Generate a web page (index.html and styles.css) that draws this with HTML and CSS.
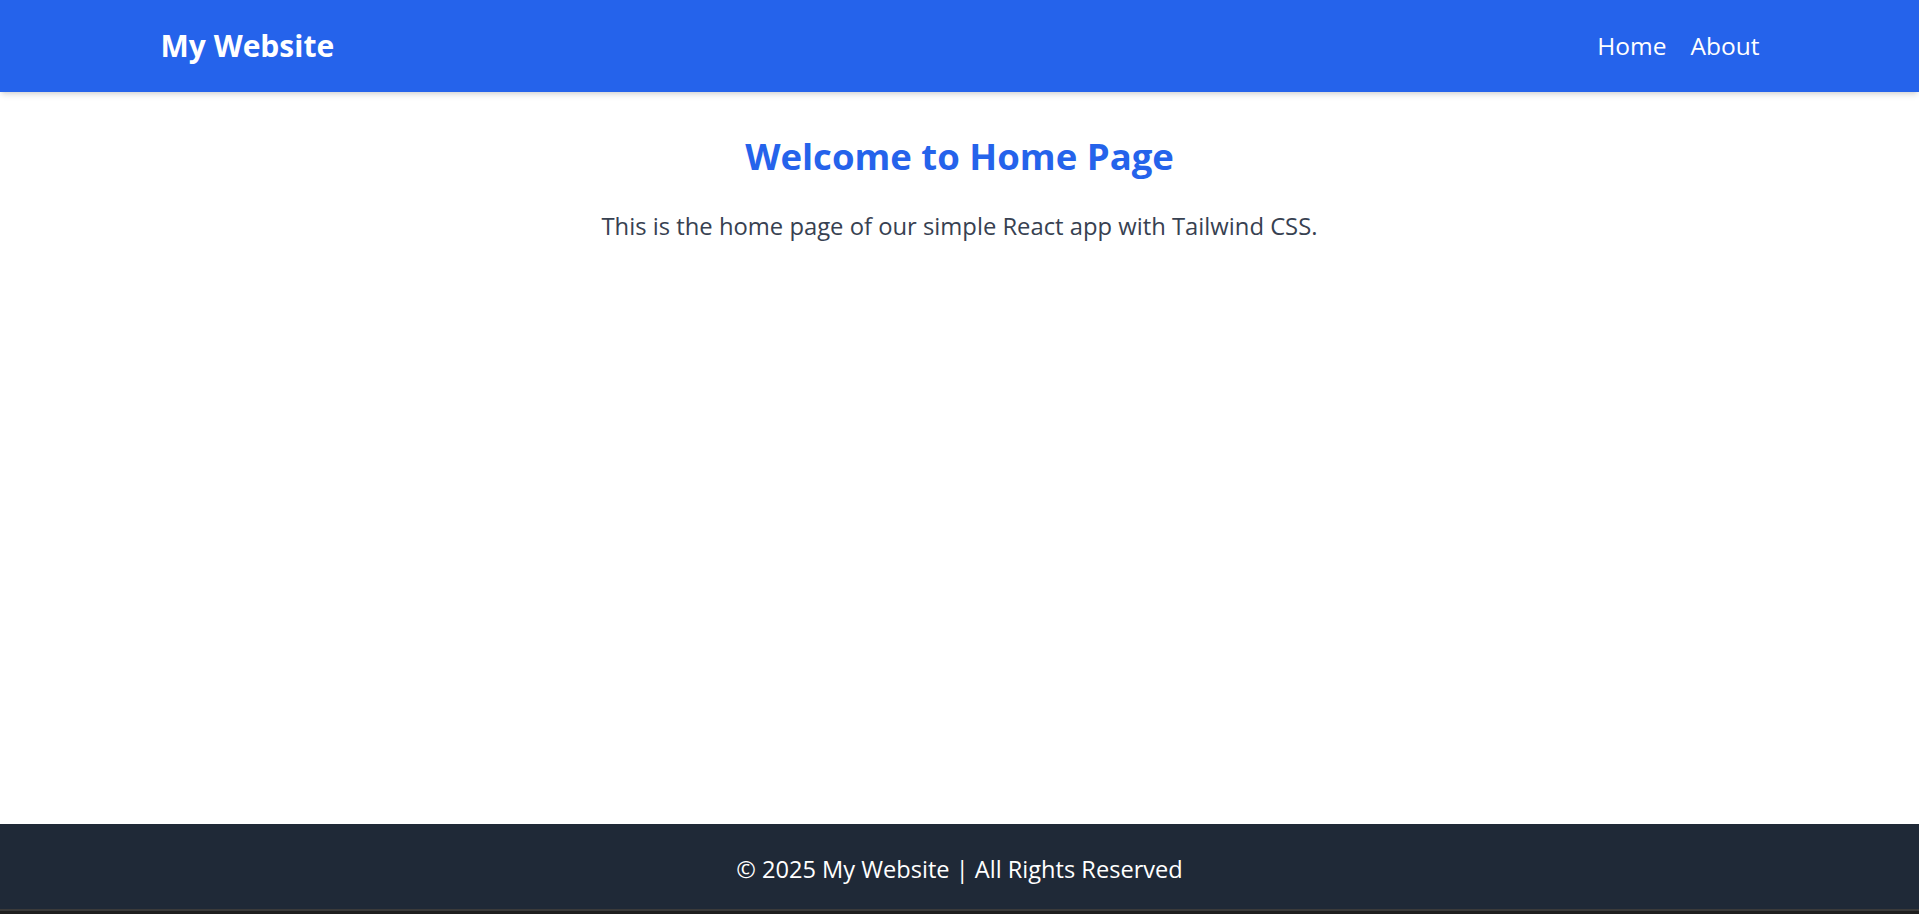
FILE: index.html
```html
<!DOCTYPE html>
<html lang="en">
<head>
<meta charset="utf-8">
<title>My Website</title>
<link rel="stylesheet" href="styles.css">
</head>
<body>
<div class="app">
  <header class="header">
    <div class="container header-inner">
      <div class="logo">My Website</div>
      <nav class="nav">
        <a href="#" class="nav-link">Home</a>
        <a href="#" class="nav-link">About</a>
      </nav>
    </div>
  </header>
  <main class="main">
    <h1 class="title">Welcome to Home Page</h1>
    <p class="lead">This is the home page of our simple React app with Tailwind CSS.</p>
  </main>
  <footer class="footer">© 2025 My Website | All Rights Reserved</footer>
  <div class="edge"></div>
</div>
</body>
</html>
```

FILE: styles.css
```css
* { box-sizing: border-box; }
html, body { margin: 0; padding: 0; }
body {
  font-family: "Open Sans", "Noto Sans", "Liberation Sans", sans-serif;
  background: #ffffff;
}
.app {
  min-height: 914px;
  height: 100vh;
  display: flex;
  flex-direction: column;
}
.header {
  height: 92px;
  flex: 0 0 92px;
  background: #2563eb;
  color: #ffffff;
  box-shadow: 0 4px 6px -1px rgba(0,0,0,0.12), 0 2px 4px -2px rgba(0,0,0,0.1);
  position: relative;
  z-index: 1;
  display: flex;
  align-items: center;
}
.container {
  width: 1600px;
  margin: 0 auto;
}
.header-inner {
  display: flex;
  justify-content: space-between;
  align-items: center;
}
.logo {
  font-size: 30px;
  font-weight: 700;
  line-height: 40px;
  padding-left: 1px;
}
.nav {
  display: flex;
  gap: 24px;
}
.nav-link {
  color: #ffffff;
  text-decoration: none;
  font-size: 24.5px;
  line-height: 34px;
}
.main {
  flex: 1 1 auto;
  padding-top: 42px;
  text-align: center;
}
.title {
  margin: 0 0 30px 0;
  color: #2563eb;
  font-size: 36.5px;
  font-weight: 700;
  line-height: 45px;
}
.lead {
  margin: 0;
  color: #374151;
  font-size: 23.8px;
  line-height: 34px;
}
.footer {
  flex: 0 0 85px;
  height: 85px;
  background: #1f2937;
  color: #ffffff;
  display: flex;
  align-items: center;
  justify-content: center;
  font-size: 23.6px;
  padding-top: 4px;
}
.edge {
  flex: 0 0 5px;
  height: 5px;
  background: #1e1e1e;
  border-top: 2px solid #3a3a3a;
}
```
